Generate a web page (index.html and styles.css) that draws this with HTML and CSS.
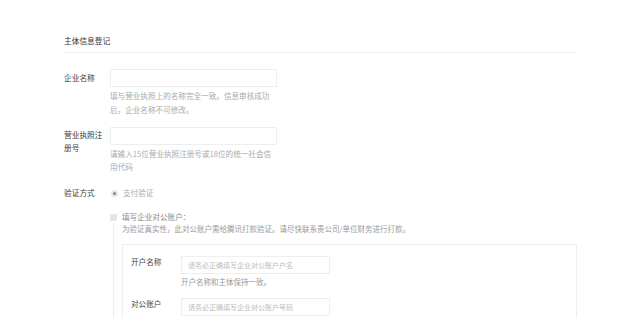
FILE: index.html
```html
<!DOCTYPE html>
<html lang="zh-CN">
<head>
  <meta charset="UTF-8">
  <title>主体信息登记</title>
  <link rel="stylesheet" href="styles.css">
</head>
<body>
  <div class="page">
    <div class="title">主体信息登记</div>

    <div class="row row-name">
      <div class="label">企业名称</div>
      <div class="field">
        <input class="input" type="text">
        <div class="help">填与营业执照上的名称完全一致。信息审核成功<br>后，企业名称不可修改。</div>
      </div>
    </div>

    <div class="row row-license">
      <div class="label label-wrap">营业执照注册号</div>
      <div class="field">
        <input class="input" type="text">
        <div class="help help-tight">请输入15位营业执照注册号或18位的统一社会信<br>用代码</div>
      </div>
    </div>

    <div class="row row-verify">
      <div class="label">验证方式</div>
      <div class="field">
        <label class="option option-muted"><span class="radio"></span>支付验证</label>
      </div>
    </div>

    <div class="account">
      <label class="option option-account"><span class="checkbox"></span>填写企业对公账户：</label>
      <div class="account-body">
        <div class="note">为验证真实性，此对公账户需给腾讯打款验证。请尽快联系贵公司/单位财务进行打款。</div>
        <div class="bank-box">
          <div class="bank-row">
            <div class="bank-label">开户名称</div>
            <div class="bank-field">
              <input class="bank-input" type="text" placeholder="请务必正确填写企业对公账户户名">
              <div class="bank-help">开户名称和主体保持一致。</div>
            </div>
          </div>
          <div class="bank-row">
            <div class="bank-label">对公账户</div>
            <div class="bank-field">
              <input class="bank-input" type="text" placeholder="请务必正确填写企业对公账户号码">
            </div>
          </div>
        </div>
      </div>
    </div>
  </div>
</body>
</html>
```

FILE: styles.css
```css
body {
  margin: 0;
  background: #fff;
  font-family: "Noto Sans CJK SC", "Noto Sans", sans-serif;
  color: #333;
  overflow: hidden;
}
.page {
  width: 513px;
  padding: 34px 0 0 64px;
}
.title {
  font-size: 7.7px;
  line-height: 14px;
  padding-bottom: 4px;
  border-bottom: 1px solid #efefef;
  color: #333;
}
.row {
  display: flex;
  gap: 4px;
}
.label {
  width: 42px;
  flex-shrink: 0;
  font-size: 7.7px;
  line-height: 18px;
  color: #3a3a3a;
}
.label-wrap {
  line-height: 12.6px;
  padding-top: 2px;
}
.field {
  display: flex;
  flex-direction: column;
}
.input {
  box-sizing: border-box;
  width: 167px;
  height: 18px;
  margin: 0;
  border: 1px solid #eee;
  border-radius: 1px;
  outline: none;
  background: #fff;
}
.help {
  margin-top: 2px;
  font-size: 7.6px;
  line-height: 14px;
  color: #aaa;
  white-space: nowrap;
}
.help-tight {
  line-height: 12.5px;
  margin-top: 3px;
}
.row-name {
  margin-top: 16px;
}
.row-license {
  margin-top: 10px;
}
.row-verify {
  margin-top: 11px;
}
.option {
  display: flex;
  align-items: center;
  gap: 5px;
  font-size: 7.6px;
  line-height: 18px;
  color: #aaa;
}
.radio {
  box-sizing: border-box;
  width: 7px;
  height: 7px;
  margin-left: 1px;
  border-radius: 50%;
  border: 2px solid #e6e6e6;
  background: #8a8a8a;
}
.account {
  margin: 9px 0 0 46px;
}
.option-account {
  line-height: 12px;
  color: #888;
}
.checkbox {
  width: 7px;
  height: 7px;
  border-radius: 1px;
  background: #e6e6e6;
}
.account-body {
  margin-left: 3px;
  padding-left: 8px;
  border-left: 1px solid #eee;
}
.note {
  font-size: 7.5px;
  line-height: 12px;
  color: #999;
  white-space: nowrap;
}
.bank-box {
  margin-top: 9px;
  padding: 11px 0 20px 8px;
  border: 1px solid #eee;
}
.bank-row {
  display: flex;
  gap: 4px;
}
.bank-row + .bank-row {
  margin-top: 10px;
}
.bank-label {
  width: 46px;
  flex-shrink: 0;
  font-size: 7.6px;
  line-height: 11px;
  color: #444;
}
.bank-field {
  display: flex;
  flex-direction: column;
}
.bank-input {
  box-sizing: border-box;
  width: 149px;
  height: 18px;
  margin: 0;
  padding: 0 6px;
  border: 1px solid #eee;
  outline: none;
  font-family: inherit;
  font-size: 7px;
  color: #333;
}
.bank-input::placeholder {
  color: #bbb;
}
.bank-help {
  margin-top: 2px;
  font-size: 7.5px;
  line-height: 12px;
  color: #999;
}
```
